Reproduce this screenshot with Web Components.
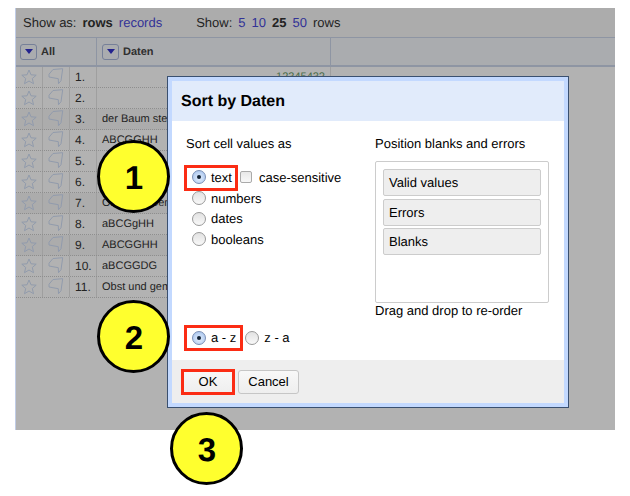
<!DOCTYPE html>
<html>
<head>
<meta charset="utf-8">
<title>Sort by Daten</title>
<style>
  html, body { margin: 0; background: #fff; }
  body { font: 12px "Liberation Sans", Arial, sans-serif; color: #000; text-rendering: geometricPrecision; }
  #page { width: 630px; height: 496px; position: relative; overflow: hidden; }
</style>
</head>
<body>
<div id="page">
  <grid-sheet>
    <grid-row num="1." data="12345432" right></grid-row>
    <grid-row num="2."></grid-row>
    <grid-row num="3." data="der Baum steht im Wald" alt></grid-row>
    <grid-row num="4." data="ABCGGHH"></grid-row>
    <grid-row num="5." data="ABCGGHH"></grid-row>
    <grid-row num="6." data="aBCGgHH"></grid-row>
    <grid-row num="7." data="Obst und Gemüse" alt></grid-row>
    <grid-row num="8." data="aBCGgHH"></grid-row>
    <grid-row num="9." data="ABCGGHH" alt></grid-row>
    <grid-row num="10." data="aBCGGDG"></grid-row>
    <grid-row num="11." data="Obst und gemüse"></grid-row>
  </grid-sheet>
  <sort-dialog></sort-dialog>
  <red-mark style="left:184px;top:165px;width:54px;height:26px"></red-mark>
  <red-mark style="left:184px;top:325px;width:59px;height:26px"></red-mark>
  <red-mark style="left:181px;top:369px;width:54px;height:26px"></red-mark>
  <step-badge style="left:97px;top:140px">1</step-badge>
  <step-badge style="left:97px;top:300px">2</step-badge>
  <step-badge style="left:170px;top:412px">3</step-badge>
</div>

<script>
// one data row of the grid
class GridRow extends HTMLElement {
  connectedCallback() {
    const root = this.attachShadow({ mode: 'open' });
    const data = this.getAttribute('data') || '';
    root.innerHTML = `
      <style>
        :host { display: flex; width: 315px; height: 21px; box-sizing: border-box; border-bottom: 1px dotted #ccc; color: #333; font-size: 11px; line-height: 20px; }
        :host([alt]) { background: #f6f6f6; }
        .icon { width: 27px; box-sizing: border-box; border-right: 1px solid #e4e4e4; display: flex; align-items: center; justify-content: center; }
        .num { width: 27px; flex: none; box-sizing: border-box; border-right: 1px solid #e4e4e4; padding-left: 5px; font-size: 12px; }
        .data { width: 234px; flex: none; box-sizing: border-box; border-right: 1px solid #e4e4e4; padding: 0 5px; white-space: nowrap; overflow: hidden; font-size: 11px; }
        :host([right]) .data { text-align: right; color: #6a9a6a; }
        svg { fill: none; stroke: #d0def6; stroke-width: 1; }
      </style>
      <div class="icon"><svg width="16" height="16" viewBox="0 0 16 16"><path d="M8 1 10 5.8 15.2 6.2 11.3 9.5 12.5 14.7 8 12 3.5 14.7 4.7 9.5 .8 6.2 6 5.8Z"/></svg></div>
      <div class="icon"><svg width="16" height="17" viewBox="0 0 16 17" style="margin-top:-2px"><path d="M1 6.2 5 1.5 14.7 .7 13 12.7 10.5 15.7 10.3 10.7 1 9Z"/></svg></div>
      <div class="num">${this.getAttribute('num')}</div>
      <div class="data">${data}</div>`;
  }
}
customElements.define('grid-row', GridRow);

// the data table behind the dialog, dimmed by .dim
class GridSheet extends HTMLElement {
  connectedCallback() {
    const root = this.attachShadow({ mode: 'open' });
    root.innerHTML = `
      <style>
        :host { display: block; position: absolute; left: 15px; top: 8px; width: 600px; height: 422px; background: #fff; overflow: hidden; box-sizing: border-box; border-left: 1px solid #c0cce6; font-size: 13px; }
        .dim { position: absolute; inset: 0 0 0 -1px; background: rgba(0,0,0,.3); }
        .bar { display: flex; height: 30px; align-items: center; background: #f7f7f7; border-bottom: 1px solid #ccd6ea; color: #333; box-sizing: border-box; padding-left: 7px; }
        .bar a { color: #4a4ad8; margin-left: 6px; }
        .bar b { margin-left: 6px; }
        .show { margin-left: 34px; }
        .head { display: flex; height: 29px; background: #f4f6fb; border-bottom: 2px solid #ccd6ea; box-sizing: border-box; font-size: 11px; font-weight: bold; color: #444; }
        .head div { display: flex; align-items: center; gap: 4px; box-sizing: border-box; padding-left: 4px; border-right: 1px solid #ccd6ea; }
        .all { width: 81px; }
        .col { width: 234px; padding-left: 5px !important; }
        i { display: flex; align-items: center; justify-content: center; width: 17px; height: 16px; box-sizing: border-box; border: 1px solid #a9b8da; border-radius: 3px; }
        i::after { content: ""; border: 4px solid transparent; border-top: 5px solid #33c; border-bottom: 0; }
      </style>
      <div class="bar">
        <span>Show as:</span><b>rows</b><a>records</a>
        <span class="show">Show:</span><a>5</a><a>10</a><b>25</b><a>50</a><span style="margin-left:6px">rows</span>
      </div>
      <div class="head">
        <div class="all"><i></i>All</div>
        <div class="col"><i></i>Daten</div>
      </div>
      <slot></slot>
      <div class="dim"></div>`;
  }
}
customElements.define('grid-sheet', GridSheet);

class RadioDot extends HTMLElement {
  connectedCallback() {
    this.attachShadow({ mode: 'open' }).innerHTML = `
      <style>
        :host { display: inline-block; width: 14px; height: 14px; box-sizing: border-box; border: 1px solid #999; border-radius: 50%; background: linear-gradient(#e2e2e2, #f8f8f8); flex: none; position: relative; }
        :host([on]) { border-color: #7a8fb5; background: radial-gradient(circle at 50% 60%, #e4eefc, #9fbfec); }
        :host([on])::after { content: ""; position: absolute; left: 4px; top: 4px; width: 4px; height: 4px; border-radius: 50%; background: #123; }
      </style>`;
  }
}
customElements.define('radio-dot', RadioDot);

class SortDialog extends HTMLElement {
  connectedCallback() {
    const root = this.attachShadow({ mode: 'open' });
    root.innerHTML = `
      <style>
        :host { display: flex; flex-direction: column; position: absolute; left: 167px; top: 76px; width: 402px; height: 332px; box-sizing: border-box; border: 1px solid #3a5070; background: #fff; font-size: 13px; }
        .frame { flex: 1; display: flex; flex-direction: column; border: 4px solid #c3d9ff; }
        h1 { margin: 0; height: 40px; line-height: 41px; padding-left: 9px; background: #e1ebfb; font-size: 16px; font-weight: bold; }
        .body { flex: 1; display: grid; grid-template-columns: 189px 1fr; padding: 15px 0 0 14px; }
        .left { display: flex; flex-direction: column; }
        .cap { line-height: 15px; }
        .opts { margin-top: 16px; display: flex; flex-direction: column; padding-left: 6px; }
        label { display: flex; align-items: center; gap: 5px; height: 20.7px; }
        .check { width: 12px; height: 12px; box-sizing: border-box; border: 1px solid #aaa; border-radius: 2px; margin-left: 3px; margin-right: 2px; background: linear-gradient(#e8e8e8, #f8f8f8); }
        .order { margin-top: auto; margin-bottom: 12px; display: flex; padding-left: 6px; }
        .order label + label { margin-left: 9px; }
        .right { display: flex; flex-direction: column; }
        .box { margin-top: 10px; width: 174px; height: 142px; box-sizing: border-box; border: 1px solid #ccc; border-radius: 2px; padding: 7px; display: flex; flex-direction: column; gap: 2.5px; }
        .item { height: 27px; flex: none; box-sizing: border-box; border: 1px solid #ccc; border-radius: 2px; background: #eee; padding-left: 5px; line-height: 25px; }
        .hint { line-height: 15px; }
        .foot { height: 43px; background: #eee; display: flex; align-items: center; gap: 3px; padding-left: 9px; box-sizing: border-box; }
        button { font: inherit; height: 24px; width: 61px; padding: 0; background: linear-gradient(#f8f8f8, #eee); color: #000; border: 1px solid #c6c6c6; border-radius: 3px; }
        .ok { width: 54px; }
      </style>
      <div class="frame">
        <h1>Sort by Daten</h1>
        <div class="body">
          <div class="left">
            <div class="cap">Sort cell values as</div>
            <div class="opts">
              <label><radio-dot on></radio-dot>text<span class="check"></span>case-sensitive</label>
              <label><radio-dot></radio-dot>numbers</label>
              <label><radio-dot></radio-dot>dates</label>
              <label><radio-dot></radio-dot>booleans</label>
            </div>
            <div class="order">
              <label><radio-dot on></radio-dot>a - z</label>
              <label><radio-dot></radio-dot>z - a</label>
            </div>
          </div>
          <div class="right">
            <div class="cap">Position blanks and errors</div>
            <div class="box">
              <div class="item">Valid values</div>
              <div class="item">Errors</div>
              <div class="item">Blanks</div>
            </div>
            <div class="hint">Drag and drop to re-order</div>
          </div>
        </div>
        <div class="foot"><button class="ok">OK</button><button>Cancel</button></div>
      </div>`;
  }
}
customElements.define('sort-dialog', SortDialog);

// red rectangle drawn over a control in the annotated screenshot
class RedMark extends HTMLElement {
  connectedCallback() {
    this.attachShadow({ mode: 'open' }).innerHTML = `<style>:host { display: block; position: absolute; box-sizing: border-box; border: 3px solid #fb2c14; }</style>`;
  }
}
customElements.define('red-mark', RedMark);

class StepBadge extends HTMLElement {
  connectedCallback() {
    this.attachShadow({ mode: 'open' }).innerHTML = `
      <style>
        :host { display: flex; align-items: center; justify-content: center; position: absolute; width: 73px; height: 73px; box-sizing: border-box; border: 3px solid #000; border-radius: 50%; background: #ffff2e; padding: 2px 0 0 1px; font: bold 33px "Liberation Sans", Arial, sans-serif; color: #000; }
      </style><slot></slot>`;
  }
}
customElements.define('step-badge', StepBadge);
</script>
</body>
</html>
